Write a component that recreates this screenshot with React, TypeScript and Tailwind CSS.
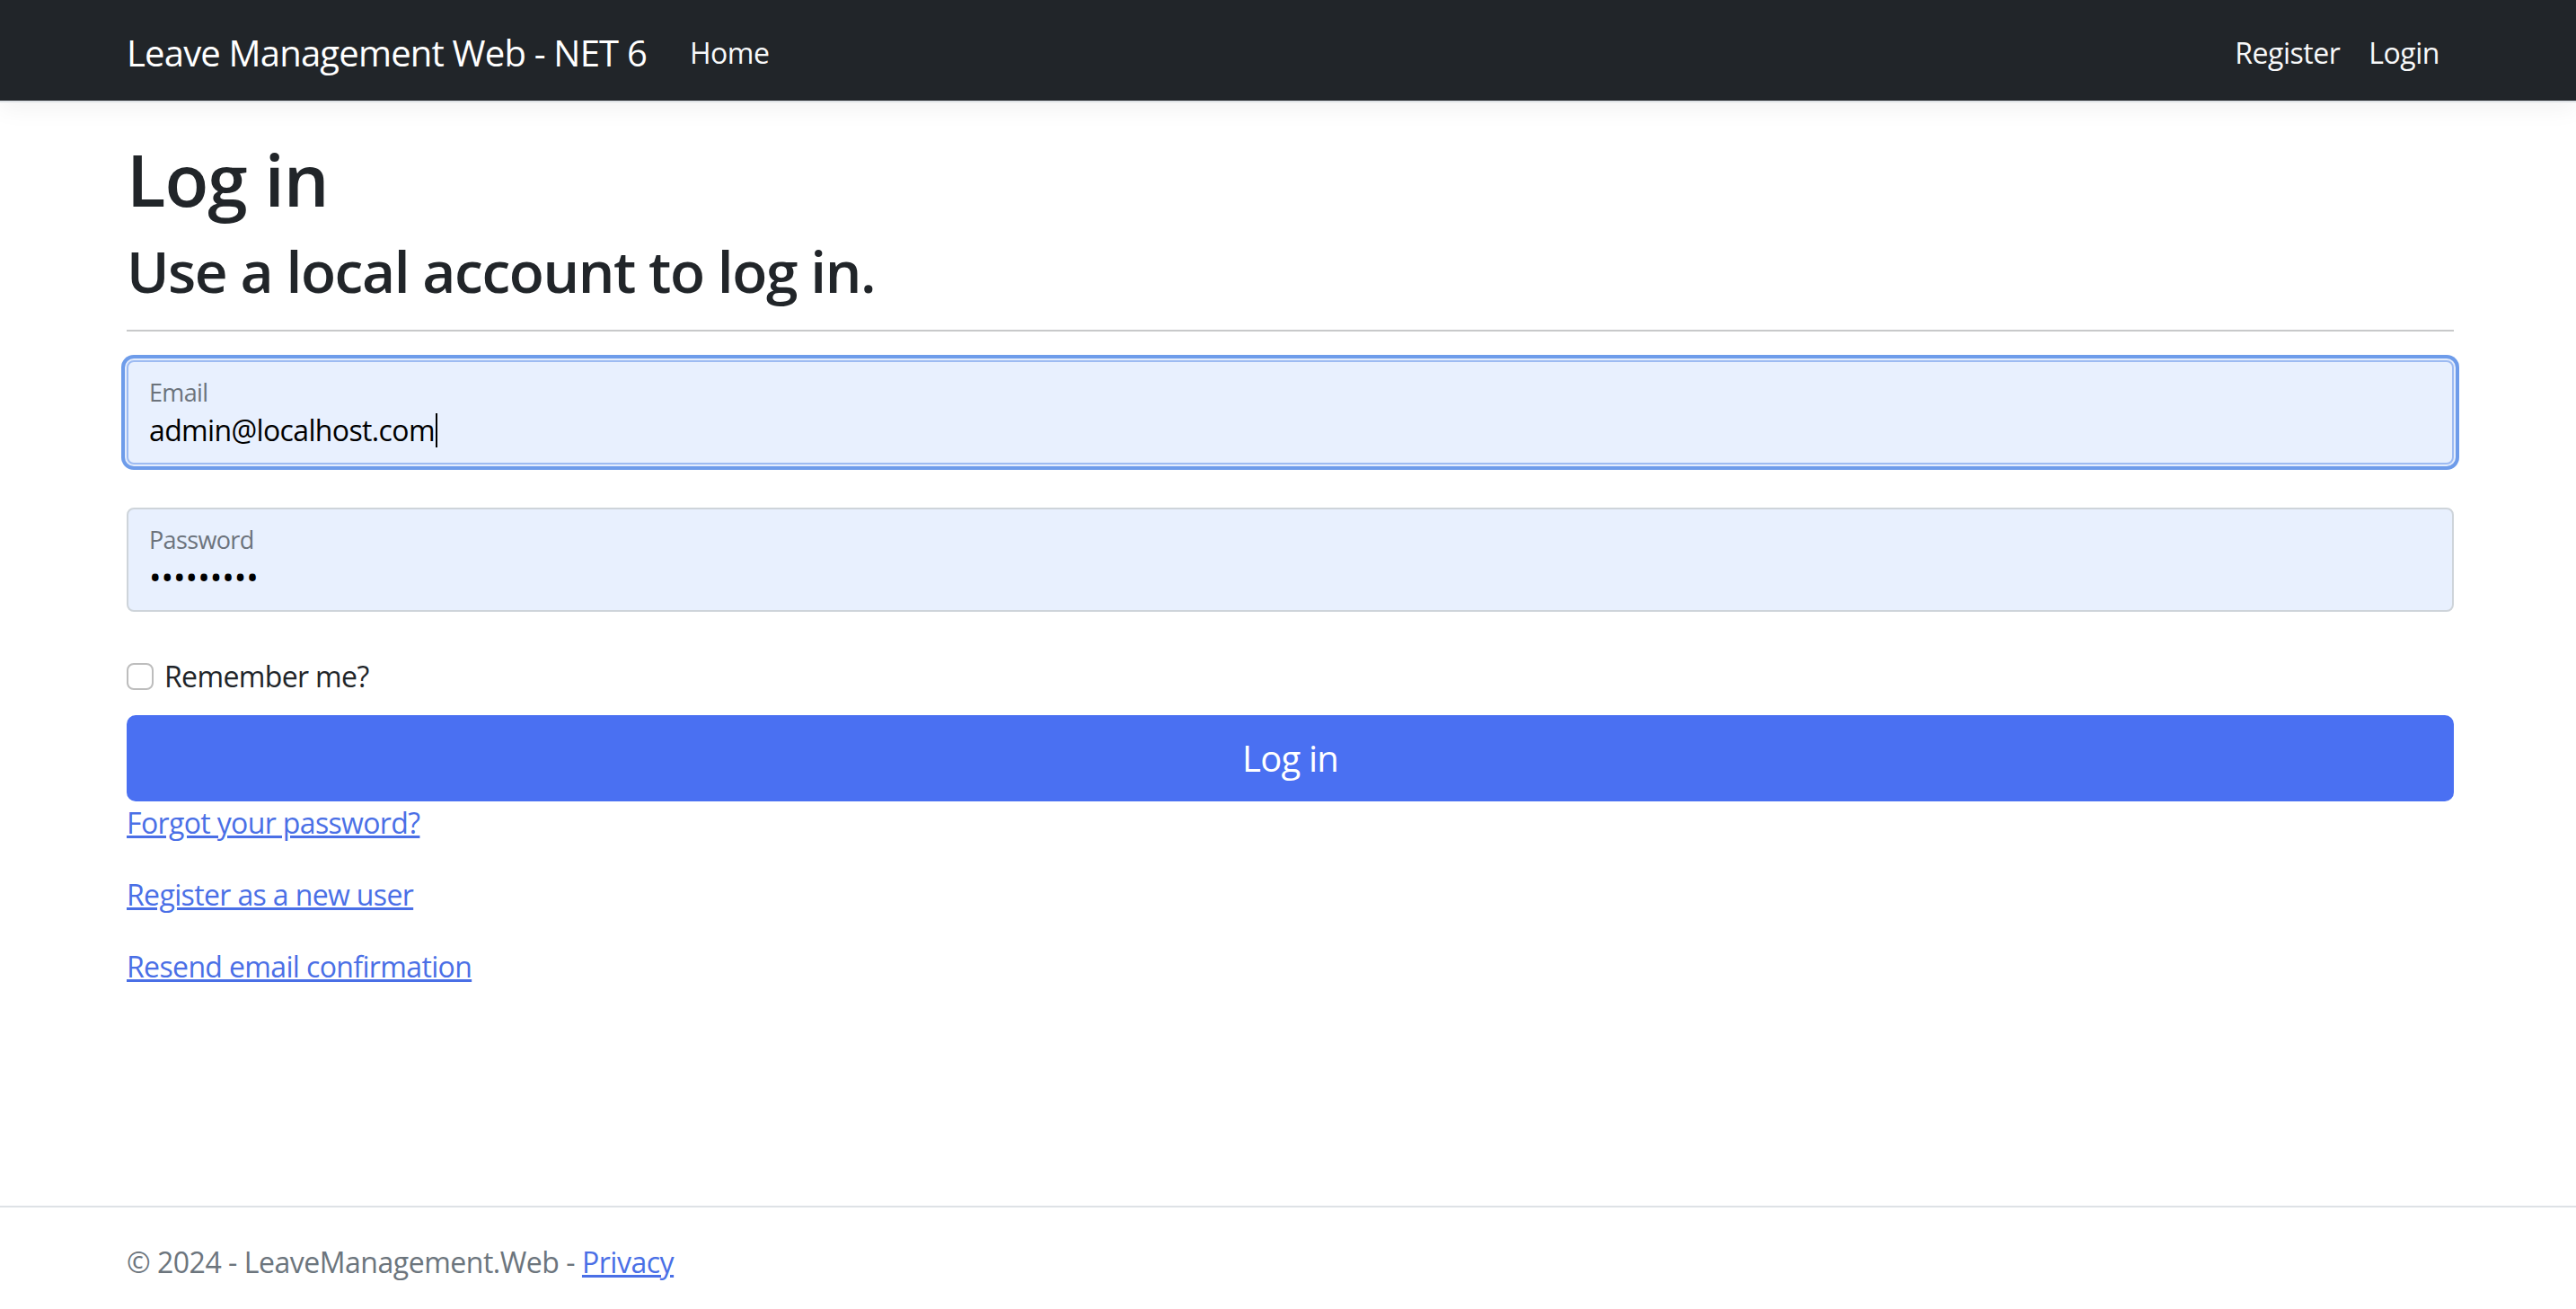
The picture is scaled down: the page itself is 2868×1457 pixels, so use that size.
import React from "react";

const navLinks = ["Register", "Login"];

const footerLinks = [
    "Forgot your password?",
    "Register as a new user",
    "Resend email confirmation",
];

export default function App() {
    return (
        <div className="flex h-[1457px] flex-col overflow-hidden bg-white font-['Open_Sans',sans-serif] tracking-[-0.03em] text-[#212529]">
            {/* Navbar */}
            <header className="relative z-10 shrink-0 border-b-2 border-[#dee2e6] bg-[#212529] shadow-[0_8px_24px_rgba(0,0,0,0.05)]">
                <nav className="ml-[141px] flex h-[112px] w-[2591px] items-center pt-[6px]">
                    <a href="#" className="mr-[32px] text-[40px] leading-[60px] tracking-[-0.02em] text-white">
                        Leave Management Web - NET 6
                    </a>
                    <a href="#" className="px-[16px] text-[32px] leading-[48px] text-[#f8f9fa]">
                        Home
                    </a>
                    <div className="ml-auto flex">
                        {navLinks.map((name) => (
                            <a key={name} href="#" className="px-[16px] text-[32px] leading-[48px] text-[#f8f9fa]">
                                {name}
                            </a>
                        ))}
                    </div>
                </nav>
            </header>

            {/* Main */}
            <main className="flex-1">
                <div className="ml-[141px] w-[2591px] pt-[37px] tracking-[-0.04em]">
                    <h1 className="mb-[16px] text-[80px] font-semibold leading-[96px] tracking-[-0.0125em]">Log in</h1>
                    <h2 className="text-[64px] font-semibold leading-[77px] tracking-[-0.022em]">
                        Use a local account to log in.
                    </h2>
                    <hr className="mb-[32px] mt-[27px] h-0 border-0 border-t-2 border-[#c8c9ca]" />

                    <div className="flex flex-col gap-[48px]">
                        {/* Email (focused, autofilled) */}
                        <div className="h-[116px] rounded-[8px] border-2 border-[#9dbbf2] bg-[#e8f0fe] px-[23px] pt-[16px] shadow-[0_0_0_2px_#e3ecfc,0_0_0_6px_#6e9cea]">
                            <div className="text-[27px] leading-[36px] text-[#6c737c]">Email</div>
                            <div className="flex items-center text-[32px] leading-[48px] text-black">
                                admin@localhost.com
                                <span className="ml-[1px] inline-block h-[38px] w-[2px] bg-black" />
                            </div>
                        </div>

                        {/* Password */}
                        <div className="h-[116px] rounded-[8px] border-2 border-[#ced4da] bg-[#e8f0fe] px-[23px] pt-[16px]">
                            <div className="text-[27px] leading-[36px] text-[#6c737c]">Password</div>
                            <div className="text-[36px] leading-[48px] tracking-normal text-black">•••••••••</div>
                        </div>

                        <label className="mb-[19px] flex h-[48px] items-center gap-[12px] text-[32px]">
                            <span className="h-[30px] w-[30px] rounded-[8px] border-2 border-[#bdbdbd] bg-white" />
                            Remember me?
                        </label>
                    </div>

                    <button className="h-[96px] w-full rounded-[10px] bg-[#4a70f2] text-[40px] leading-[60px] tracking-[-0.02em] text-white">
                        Log in
                    </button>

                    <div>
                        {footerLinks.map((text) => (
                            <p key={text} className="mb-[32px] text-[32px] leading-[48px]">
                                <a href="#" className="text-[#4a6fe6] underline">
                                    {text}
                                </a>
                            </p>
                        ))}
                    </div>
                </div>
            </main>

            {/* Footer */}
            <footer className="h-[115px] shrink-0 overflow-hidden border-t-2 border-[#dee2e6]">
                <div className="ml-[141px] w-[2591px] whitespace-nowrap text-[32px] leading-[122px] text-[#6c757d]">
                    © 2024 - LeaveManagement.Web -{" "}
                    <a href="#" className="text-[#4a6fe6] underline">
                        Privacy
                    </a>
                </div>
            </footer>
        </div>
    );
}
